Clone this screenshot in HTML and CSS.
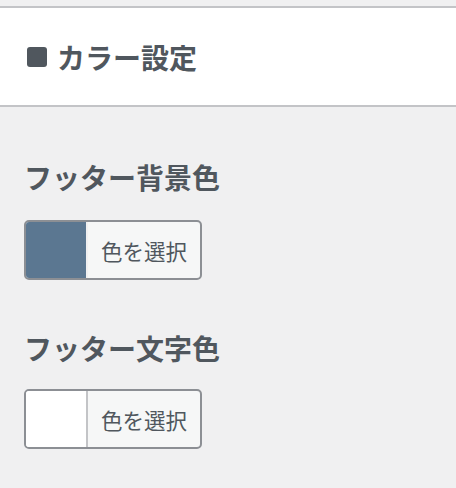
FILE: index.html
```html
<!DOCTYPE html>
<html lang="ja">
<head>
<meta charset="utf-8">
<link rel="stylesheet" href="styles.css">
</head>
<body>
<div class="top-gap"></div>
<div class="panel">
  <h2 class="panel-title"><span class="square"></span>カラー設定</h2>
</div>
<div class="content">
  <div class="field">
    <div class="field-label">フッター背景色</div>
    <button class="color-btn"><span class="swatch" style="background:#5b7791"></span><span class="btn-text">色を選択</span></button>
  </div>
  <div class="field second">
    <div class="field-label">フッター文字色</div>
    <button class="color-btn"><span class="swatch light" style="background:#ffffff"></span><span class="btn-text">色を選択</span></button>
  </div>
</div>
</body>
</html>
```
FILE: styles.css
```css
html, body {
  margin: 0;
  padding: 0;
  background: #f0f0f1;
  font-family: "Noto Sans CJK JP", "Noto Sans", sans-serif;
  color: #50575e;
}
.top-gap {
  height: 6px;
}
.panel {
  background: #fff;
  border-top: 2px solid #c3c4c7;
  border-bottom: 2px solid #c3c4c7;
  height: 97px;
  display: flex;
  align-items: center;
  padding-left: 27px;
}
.panel-title {
  margin: 0;
  font-size: 28px;
  font-weight: 700;
  line-height: 1;
  display: flex;
  align-items: center;
  color: #50575e;
}
.square {
  display: inline-block;
  width: 20px;
  height: 20px;
  border-radius: 3px;
  background: #50575e;
  margin-right: 10px;
}
.content {
  padding: 52px 0 0 24px;
}
.field-label {
  font-size: 28px;
  font-weight: 700;
  line-height: 36px;
  height: 36px;
  margin-left: 0;
}
.field.second {
  margin-top: 50px;
}
.color-btn {
  margin-top: 25px;
  display: flex;
  width: 178px;
  height: 60px;
  padding: 0;
  border: 2px solid #8c8f94;
  border-radius: 5px;
  background: #f6f7f7;
  overflow: hidden;
  font-family: inherit;
  cursor: pointer;
}
.field.second .color-btn {
  margin-top: 23px;
}
.swatch {
  width: 60px;
  height: 100%;
  border-right: 2px solid #f0f0f1;
  flex: none;
}
.swatch.light {
  border-right-color: #c3c4c7;
}
.btn-text {
  flex: 1;
  display: flex;
  align-items: center;
  justify-content: center;
  font-size: 21.5px;
  color: #50575e;
}
```
